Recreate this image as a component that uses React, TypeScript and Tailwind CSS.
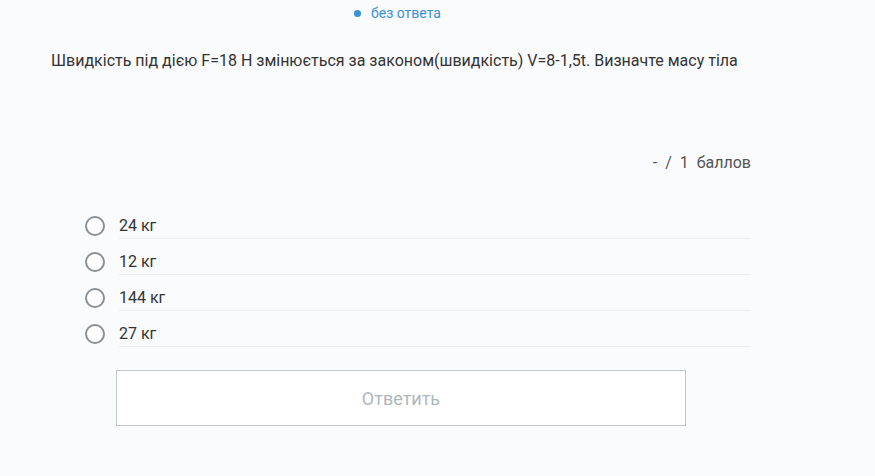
import React from 'react';

const options = ['24 кг', '12 кг', '144 кг', '27 кг'];

export default function App() {
  return (
    <div className="min-h-[476px] w-full bg-[#fafbfc] font-['Roboto',sans-serif] text-[#333]">
      <div className="w-[700px] ml-[51px]">
        <div className="flex items-center pt-[4px] pl-[303px] h-[22px] text-[14px] text-[#3d8fd6]">
          <span className="w-[7px] h-[7px] rounded-full bg-[#3d8fd6] mr-[10px]" />
          <span>без ответа</span>
        </div>

        <p className="mt-[27px] text-[16px] leading-[24px] text-[#333]">
          Швидкість під дією F=18 Н змінюється за законом(швидкість) V=8-1,5t. Визначте масу тіла
        </p>

        <div className="mt-[78px] flex justify-end text-[16px] leading-[24px] text-[#555]">
          <span>-&nbsp;&nbsp;/&nbsp;&nbsp;1&nbsp;&nbsp;баллов</span>
        </div>

        <div className="mt-[28px] flex flex-col">
          {options.map((o) => (
            <label key={o} className="flex items-end h-[36px] cursor-pointer">
              <span className="ml-[34px] mb-[3px] w-[20px] h-[20px] rounded-full border-2 border-[#8a9196] bg-white shrink-0" />
              <span className="ml-[14px] flex-1 h-full flex items-end border-b border-[#eceef0] text-[16px] leading-[24px] text-[#333]">
                {o}
              </span>
            </label>
          ))}
        </div>

        <button className="mt-[23px] ml-[65px] w-[570px] h-[56px] bg-white border border-[#c4c7ca] text-[18px] text-[#aeb6bd]">
          Ответить
        </button>
      </div>
    </div>
  );
}
